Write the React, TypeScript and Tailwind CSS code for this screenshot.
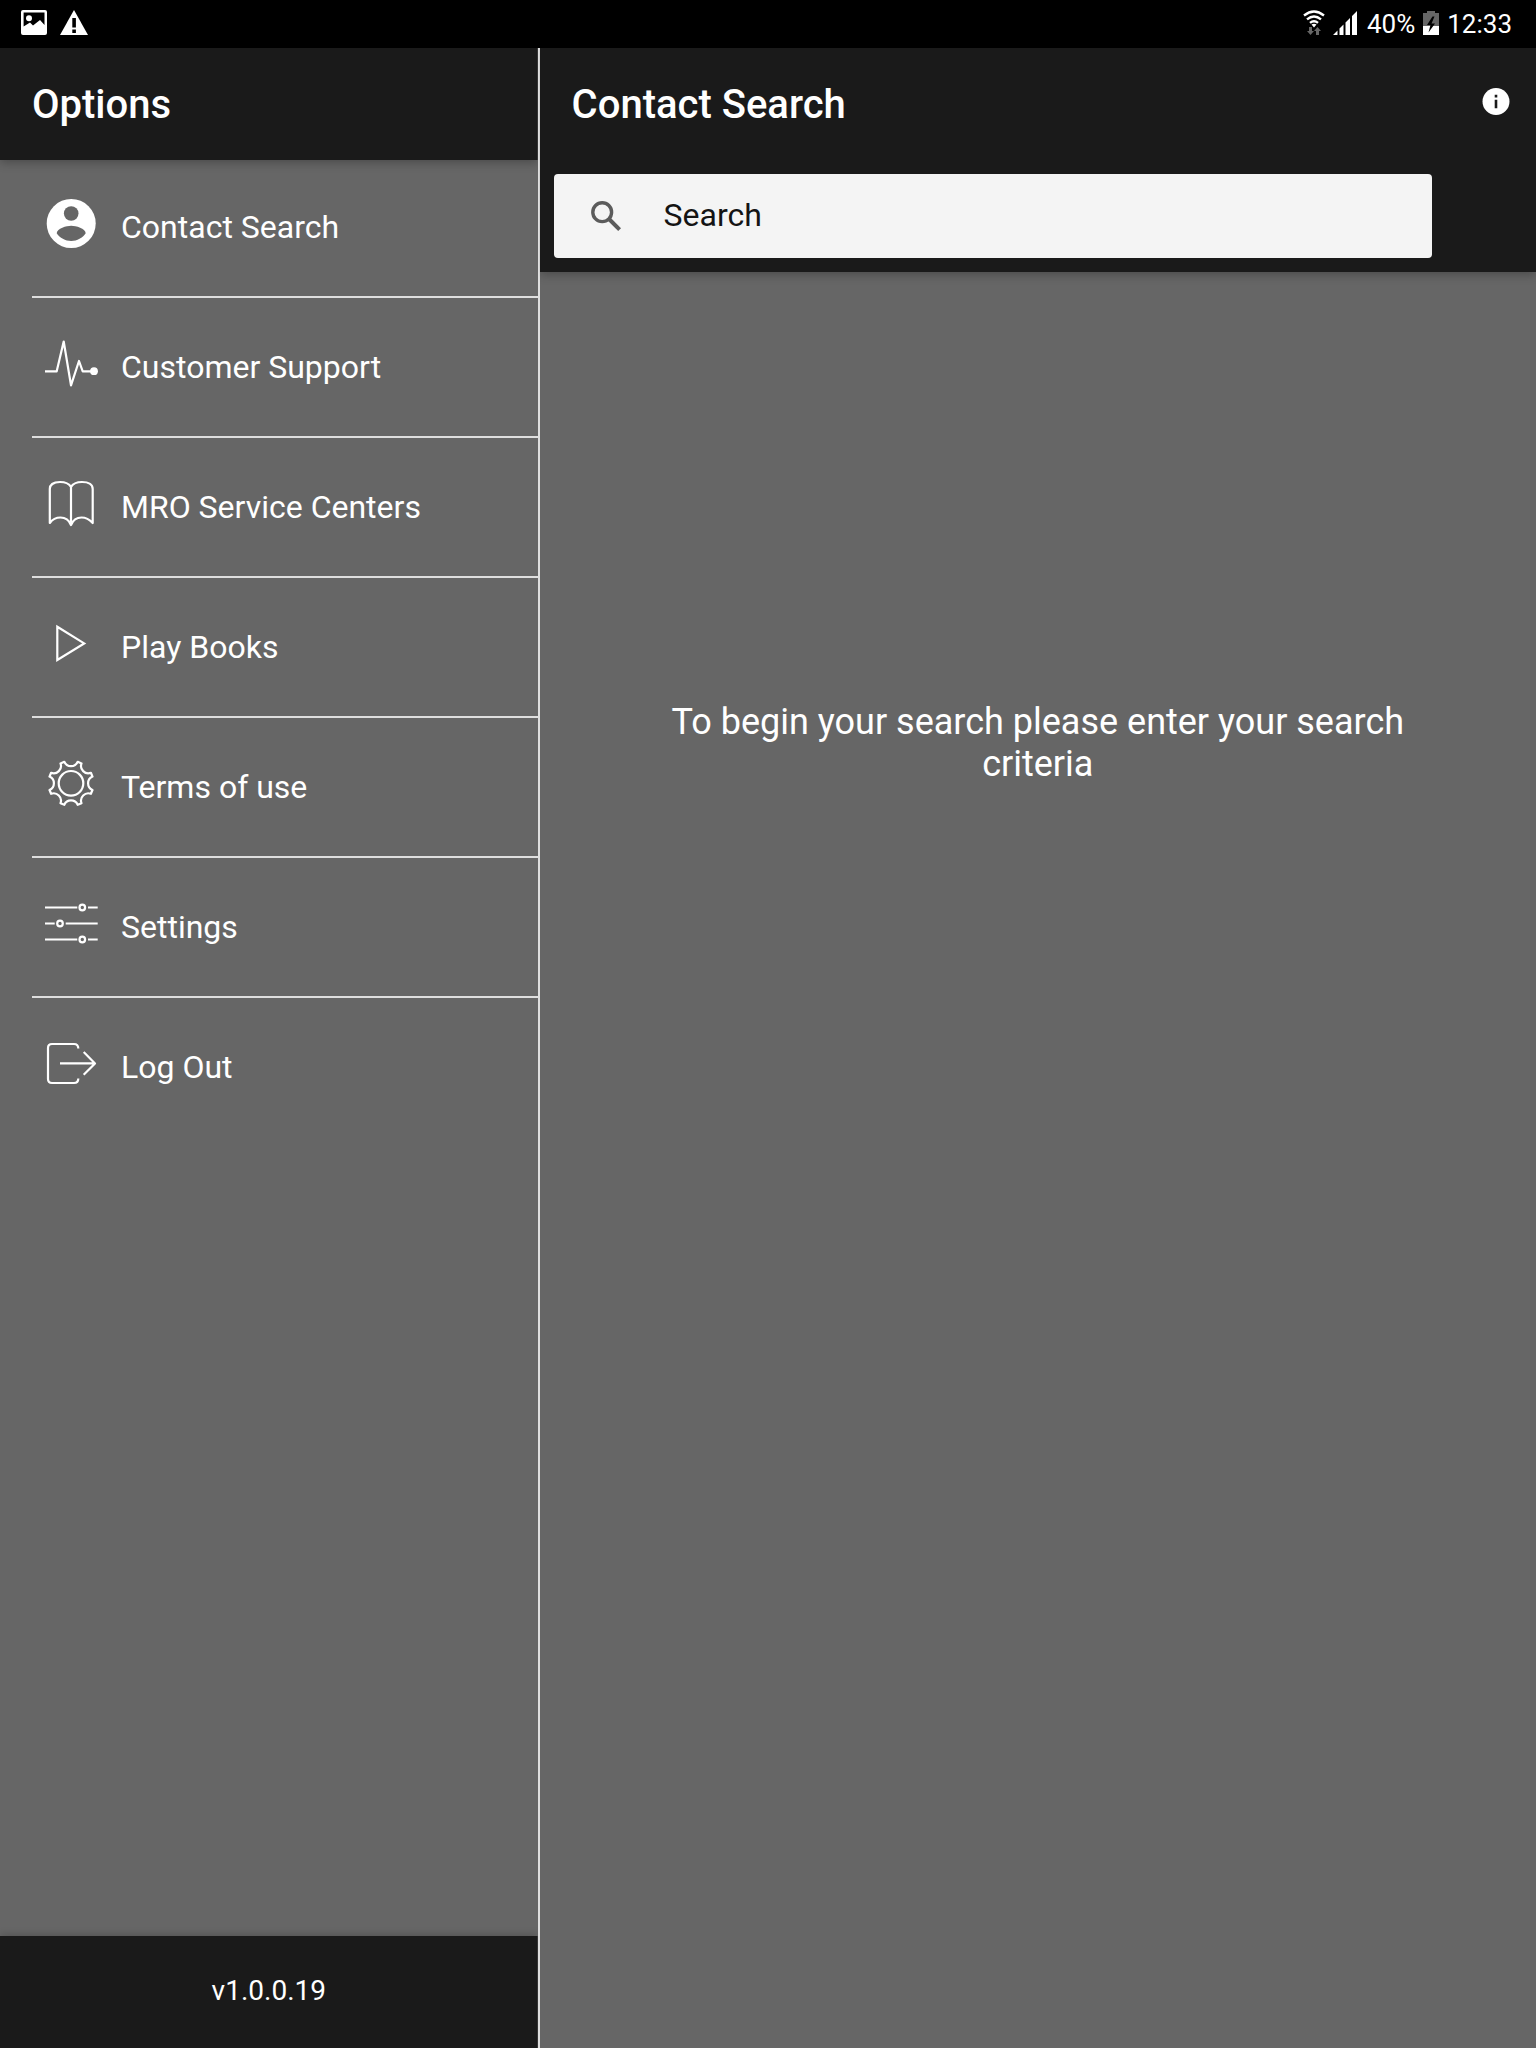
import { useState, type ReactNode } from 'react'

type MenuItem = {
  label: string
  icon: ReactNode
}

const menuItems: MenuItem[] = [
  {
    label: 'Contact Search',
    icon: (
      <>
        <circle cx="28.2" cy="24.5" r="24.5" fill="white" stroke="none" />
        <circle cx="28.2" cy="14.5" r="7.3" fill="#666666" stroke="none" />
        <path
          d="M13.7 34.3C14 29.5 23.5 26.8 28.2 26.8S42.4 29.5 42.7 34.3C39.5 39 34.2 42 28.2 42S16.8 39 13.7 34.3Z"
          fill="#666666"
          stroke="none"
        />
      </>
    ),
  },
  {
    label: 'Customer Support',
    icon: (
      <>
        <path d="M2 32.3H13.7L20.7 2.5L28 46.3L36 22L39.7 32.3H50" />
        <circle cx="51" cy="32.2" r="3.9" fill="white" stroke="none" />
      </>
    ),
  },
  {
    label: 'MRO Service Centers',
    icon: (
      <path d="M28 8C26 4.5 22 3 17 3C10 3 6.8 6 6.8 10V44C9 41 13 38.5 17.5 38.5C22 38.5 26 41 28 46C30 41 34 38.5 38.5 38.5C43 38.5 47 41 49.7 44V10C49.7 6 46 3 39 3C34 3 30 4.5 28 8ZM28 8V46" />
    ),
  },
  {
    label: 'Play Books',
    icon: <path d="M14.3 7.8L41.2 24.4L14.3 41Z" strokeLinejoin="miter" />,
  },
  {
    label: 'Terms of use',
    icon: (
      <>
        <path d="M21.3 2.8A7.3 7.3 0 0 0 34.7 2.8L38.5 4.4A7.3 7.3 0 0 0 47.9 13.8L49.5 17.6A7.3 7.3 0 0 0 49.5 31L47.9 34.8A7.3 7.3 0 0 0 38.5 44.2L34.7 45.8A7.3 7.3 0 0 0 21.3 45.8L17.5 44.2A7.3 7.3 0 0 0 8.1 34.8L6.5 31A7.3 7.3 0 0 0 6.5 17.6L8.1 13.8A7.3 7.3 0 0 0 17.5 4.4Z" />
        <circle cx="28" cy="24.3" r="12.3" />
      </>
    ),
  },
  {
    label: 'Settings',
    icon: (
      <>
        <path d="M2 8.5H34.3M45 8.5H54.7M2 24.5H11.7M22.7 24.5H54.7M2 40.5H34.3M45 40.5H54.7" />
        <circle cx="39.3" cy="8.5" r="2.8" />
        <circle cx="17" cy="24.5" r="2.8" />
        <circle cx="39.3" cy="40.5" r="2.8" />
      </>
    ),
  },
  {
    label: 'Log Out',
    icon: (
      <>
        <path d="M35.3 9.5C35.3 6.5 34 5 31 5H9C6.5 5 5 6.5 5 9V40C5 42.5 6.5 44 9 44H31C34 44 35.3 42.5 35.3 39.5" />
        <path d="M17 24.4H52M40.7 13L52 24.4L40.7 35.8" />
      </>
    ),
  },
]

function StatusBar() {
  return (
    <div className="h-12 shrink-0 bg-black flex items-center justify-between pl-5 pr-6 text-[26px] leading-none">
      <div className="flex items-center gap-3">
        <svg className="w-7 h-7" viewBox="0 1 28 28" fill="white">
          <path
            fillRule="evenodd"
            d="M3 1H25Q27 1 27 3V24Q27 26 25 26H3Q1 26 1 24V3Q1 1 3 1ZM3.6 3.5V17.5L10 13.5L13 16.5L20 11L24.5 16V3.5Z"
          />
          <circle cx="9" cy="9.3" r="3" />
        </svg>
        <svg className="w-7 h-7" viewBox="0 1 28 28">
          <path d="M14 1L28 26H0Z" fill="white" />
          <path d="M12.3 9H15.9V18.5H12.3ZM12.3 20.5H15.9V24H12.3Z" fill="black" />
        </svg>
      </div>

      <div className="flex items-center gap-2">
        <svg className="w-[22px] h-7" viewBox="1 1 22 28" fill="none" stroke="white" strokeWidth="2.4">
          <path d="M2 6.5Q12 -1.5 22 6.5M5 10.3Q12 4.5 19 10.3M8 13.9Q12 10.5 16 13.9" />
          <path d="M9.5 15.6Q12 13.9 14.5 15.6L12 18.4Z" fill="white" stroke="none" />
          <path
            d="M7 18H10V22H12L8.5 26L5 22H7ZM14 26H17V22H19L15.5 18L12 22H14Z"
            fill="#666666"
            stroke="none"
          />
        </svg>
        <svg className="w-6 h-7" viewBox="0 1 24 28" fill="white">
          <path d="M0 26L4.5 21.5V26ZM6.5 26V19.5L10.5 15.5V26ZM12.5 26V13.5L17 9V26ZM19 26V7L24 2V26Z" />
        </svg>
        <span className="pl-0.5">40%</span>
        <svg className="w-4 h-7" viewBox="0 1 16 28">
          <path d="M0 4H4V2H12V4H16V26H0Z" fill="#666666" />
          <path d="M0 17H16V26H0Z" fill="white" />
          <path d="M9.5 7.5L4 16H7.5L5.5 23.5L12 14.5H8.5L11.5 7.5Z" fill="black" />
        </svg>
        <span>12:33</span>
      </div>
    </div>
  )
}

export default function App() {
  const [query, setQuery] = useState('')

  return (
    <div className="min-h-screen flex flex-col bg-[#666666] text-white font-['Roboto',sans-serif]">
      <StatusBar />

      <div className="flex-1 flex">
        {/* Options menu */}
        <aside className="box-content w-[35%] shrink-0 flex flex-col border-r-2 border-[#dedede]">
          <header className="relative z-10 h-28 flex items-center px-8 pt-0.5 bg-[#1a1a1a] shadow-[0_2px_10px_rgba(0,0,0,0.3)] [clip-path:inset(0_0_-16px_0)]">
            <h1 className="text-[40px] font-medium">Options</h1>
          </header>

          <nav className="flex-1 -mt-0.5">
            <ul className="pl-8 divide-y-2 divide-[#dedede]">
              {menuItems.map((item) => (
                <li key={item.label}>
                  <button className="w-full h-[138px] flex items-center gap-[22px] pl-[11px] text-left text-[32px]">
                    <svg
                      className="w-14 h-14 shrink-0"
                      viewBox="0 0 56 56"
                      fill="none"
                      stroke="white"
                      strokeWidth="2.2"
                      strokeLinejoin="round"
                    >
                      {item.icon}
                    </svg>
                    <span>{item.label}</span>
                  </button>
                </li>
              ))}
            </ul>
          </nav>

          <footer className="h-28 flex items-center justify-center pb-0.5 bg-[#1a1a1a] text-[28px] shadow-[0_-1px_8px_rgba(0,0,0,0.2)] [clip-path:inset(-16px_0_0_0)]">
            v1.0.0.19
          </footer>
        </aside>

        {/* Contact search */}
        <main className="flex-1 min-w-0">
          <header className="bg-[#1a1a1a] pb-3.5 shadow-[0_2px_10px_rgba(0,0,0,0.3)] [clip-path:inset(0_0_-16px_0)]">
            <div className="h-28 flex items-center justify-between pl-8 pr-[26px] pt-0.5">
              <h2 className="text-[40px] font-medium">Contact Search</h2>
              <button aria-label="Info">
                <svg className="w-7 h-8" viewBox="0 1 28 32" overflow="visible">
                  <circle cx="14" cy="13.5" r="13.5" fill="white" />
                  <path d="M12.7 6.8H15.3V9.4H12.7ZM12.7 11.8H15.3V20.2H12.7Z" fill="#1a1a1a" />
                </svg>
              </button>
            </div>
            <div className="pt-3.5 pl-3.5 pr-[104px]">
              <label className="h-[84px] flex items-center gap-[42px] pl-9 bg-[#f4f4f4] rounded-sm">
                <svg
                  className="w-8 h-8 shrink-0"
                  viewBox="0 0 32 32"
                  fill="none"
                  stroke="#5b5b5b"
                  strokeWidth="3.4"
                >
                  <circle cx="12.2" cy="12.2" r="9.4" />
                  <path d="M19 19L29.6 29.6" strokeWidth="4" />
                </svg>
                <input
                  type="text"
                  aria-label="Search"
                  placeholder="Search"
                  value={query}
                  onChange={(e) => setQuery(e.target.value)}
                  className="flex-1 min-w-0 pb-0.5 bg-transparent outline-none text-[32px] text-[#141414] placeholder:text-[#141414]"
                />
              </label>
            </div>
          </header>

          <p className="pt-[429px] px-[10%] text-center text-[36px] leading-[42px]">
            To begin your search please enter your search criteria
          </p>
        </main>
      </div>
    </div>
  )
}
